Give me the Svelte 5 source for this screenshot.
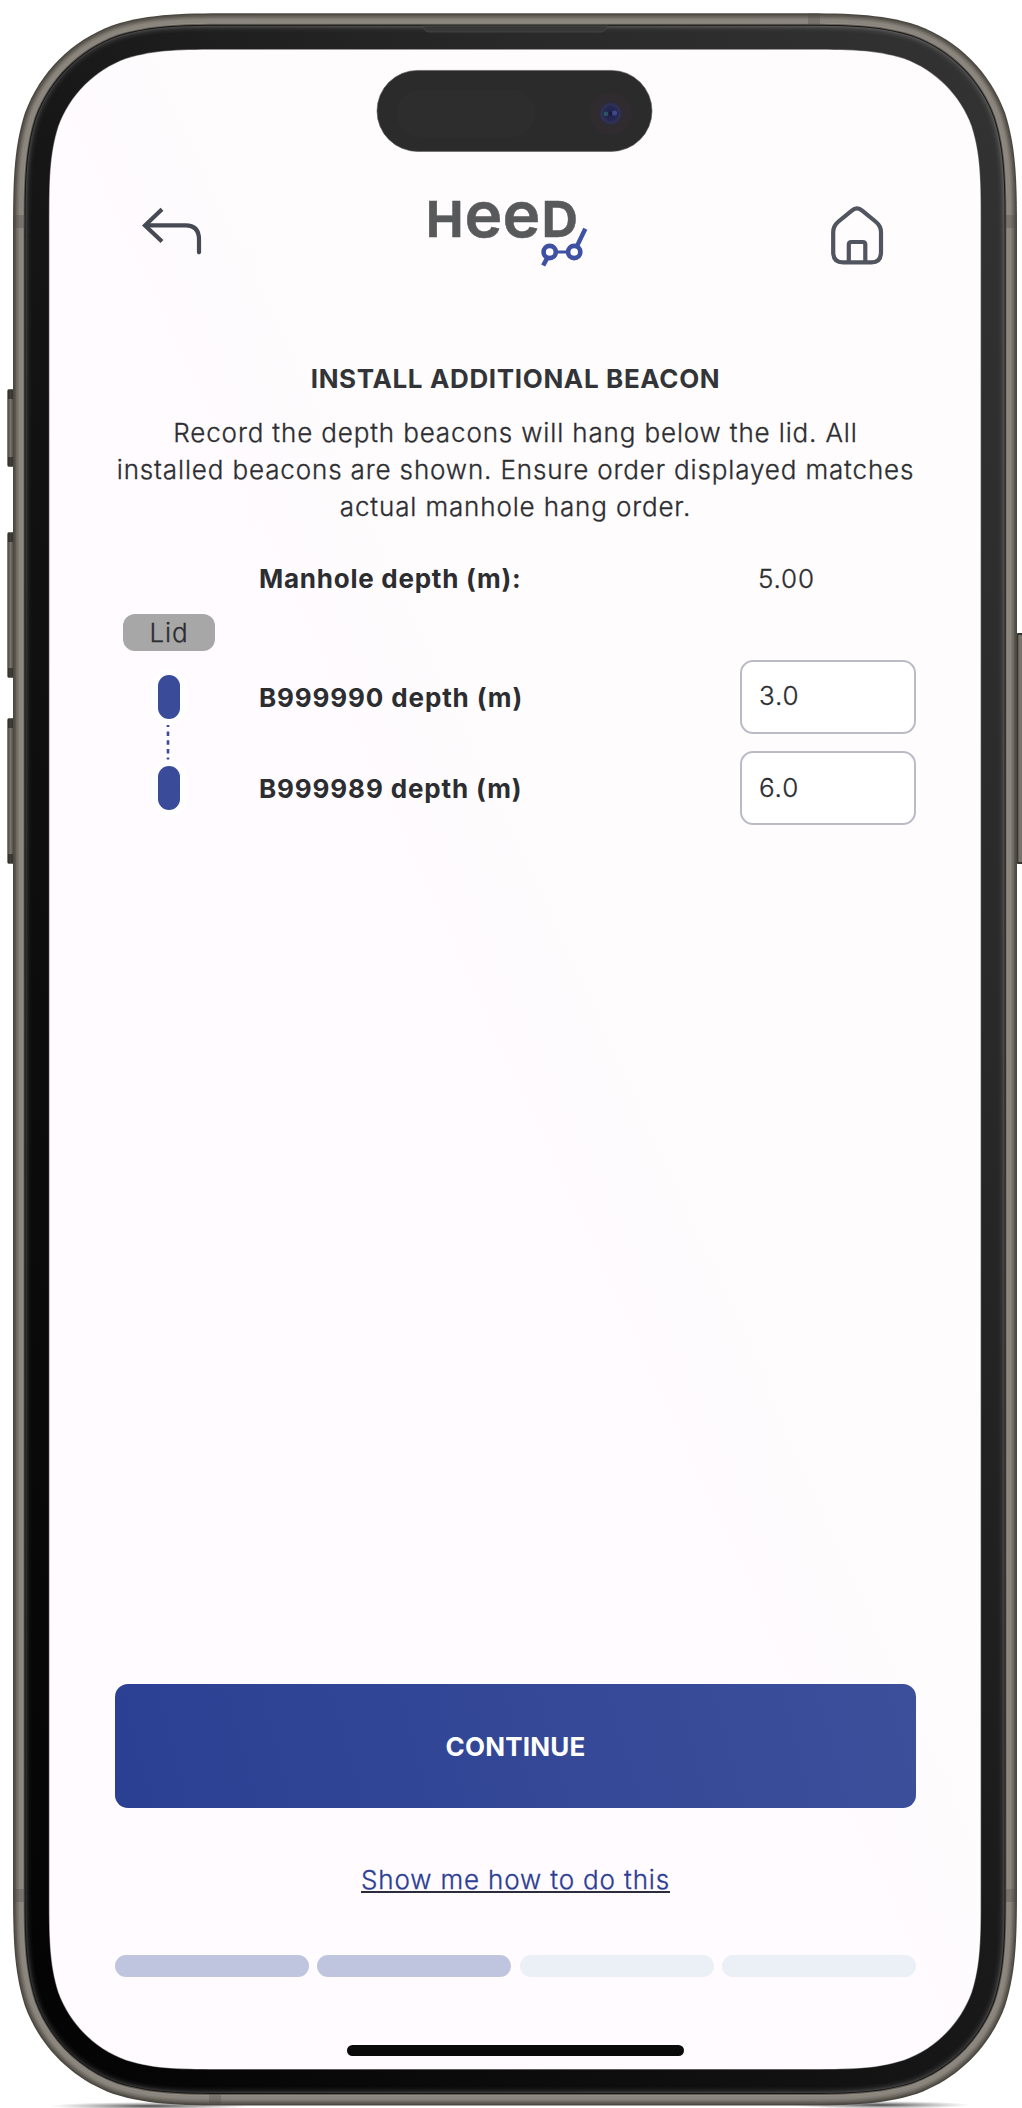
<script>
  const beacons = $state([
    { id: 'B999990', depth: '3.0' },
    { id: 'B999989', depth: '6.0' }
  ]);
  const steps = [true, true, false, false];

  const frame = { left: 13, top: 13.3, right: 1017, bottom: 2105.5, radius: 158 };

  // Continuous-corner rectangle, inset from the outer edge of the frame.
  function shell(inset) {
    const l = frame.left + inset;
    const t = frame.top + inset;
    const r = frame.right - inset;
    const b = frame.bottom - inset;
    const k = frame.radius - inset;
    const [s, m, n, p, q, u, v] = [1.45, 1.0885, 0.8684, 0.6315, 0.0749, 0.3728, 0.1691].map((f) => f * k);
    return `M${l + s} ${t}H${r - s}C${r - m} ${t} ${r - n} ${t} ${r - p} ${t + q}C${r - u} ${t + v} ${r - v} ${t + u} ${r - q} ${t + p}C${r} ${t + n} ${r} ${t + m} ${r} ${t + s}V${b - s}C${r} ${b - m} ${r} ${b - n} ${r - q} ${b - p}C${r - v} ${b - u} ${r - u} ${b - v} ${r - p} ${b - q}C${r - n} ${b} ${r - m} ${b} ${r - s} ${b}H${l + s}C${l + m} ${b} ${l + n} ${b} ${l + p} ${b - q}C${l + u} ${b - v} ${l + v} ${b - u} ${l + q} ${b - p}C${l} ${b - n} ${l} ${b - m} ${l} ${b - s}V${t + s}C${l} ${t + m} ${l} ${t + n} ${l + q} ${t + p}C${l + v} ${t + u} ${l + u} ${t + v} ${l + p} ${t + q}C${l + n} ${t} ${l + m} ${t} ${l + s} ${t}Z`;
  }

  const rim = [
    [0, '#4b4841'], [1.5, '#5b5750'], [3, '#6d6860'], [4.5, '#7d7870'], [6, '#8a857d'],
    [9.5, '#928d85'], [10.5, '#625e57'], [11.4, '#1a1917']
  ];
  const sheen = [[13, 0.18], [14, 0.13], [15, 0.08], [16, 0.05], [17, 0.03], [18, 0.015]];
  const leftKeys = [[389, 78], [532, 146], [718, 146]];
</script>

<main class="device">
  <svg class="chassis" viewBox="0 0 1022 2108" aria-hidden="true">
    <defs>
      <linearGradient id="glass" x1="0" y1="1" x2="1" y2="0">
        <stop offset="0" stop-color="#030303" />
        <stop offset="0.4" stop-color="#111" />
        <stop offset="0.75" stop-color="#292929" />
        <stop offset="1" stop-color="#333" />
      </linearGradient>
      <linearGradient id="paper" x1="0" y1="1" x2="1" y2="0">
        <stop offset="0.45" stop-color="#fffbff" />
        <stop offset="0.6" stop-color="#fefcfd" />
      </linearGradient>
      <linearGradient id="key" x1="0" x2="1">
        <stop offset="0" stop-color="#45423a" />
        <stop offset="0.45" stop-color="#78746a" />
        <stop offset="1" stop-color="#44413a" />
      </linearGradient>
      <radialGradient id="ground">
        <stop offset="0" stop-color="#333" stop-opacity="0.9" />
        <stop offset="1" stop-color="#777" stop-opacity="0" />
      </radialGradient>
      <radialGradient id="lens">
        <stop offset="0" stop-color="#20234a" />
        <stop offset="0.55" stop-color="#24274f" />
        <stop offset="0.8" stop-color="#303257" />
        <stop offset="1" stop-color="#2a2a3b" />
      </radialGradient>
    </defs>
    <ellipse cx="150" cy="2106" rx="100" ry="4" fill="url(#ground)" />
    <ellipse cx="880" cy="2105" rx="90" ry="4" fill="url(#ground)" />
    {#each leftKeys as [y, h]}
      <rect x="7.3" {y} width="7" height={h} rx="2" fill="url(#key)" />
      <rect x="8" y={y + 1} width="5" height="9" fill="#24221d" opacity="0.65" />
      <rect x="8" y={y + h - 10} width="5" height="9" fill="#24221d" opacity="0.65" />
    {/each}
    <rect x="1016" y="633" width="9" height="231" rx="2" fill="#36342f" />
    <rect x="1018.3" y="635" width="4" height="227" fill="#77736a" />
    {#each rim as [inset, tone]}
      <path d={shell(inset)} fill={tone} />
    {/each}
    <path d={shell(12.4)} fill="url(#glass)" />
    {#each sheen as [inset, alpha]}
      <path d={shell(inset)} fill="none" stroke="#fff" stroke-opacity={alpha} />
    {/each}
    <g fill="#4d4a43" opacity="0.3">
      <rect x="13" y="215" width="12" height="13" />
      <rect x="13" y="1889" width="12" height="13" />
      <rect x="1006" y="215" width="11" height="13" />
      <rect x="1006" y="1889" width="11" height="13" />
      <rect x="808" y="13.3" width="12" height="11" />
      <rect x="209" y="2094" width="12" height="11" />
    </g>
    <path d="M422 26H608L605 30Q604 32 601 32H429Q426 32 425 30Z" fill="#363736" stroke="#4d4e4d" stroke-width="0.7" />
    <path d={shell(35.8)} fill="#777" />
    <path d={shell(36.4)} fill="url(#paper)" />
    <rect x="377" y="70.4" width="275" height="81" rx="40.5" fill="#2a2b2a" stroke="#555855" stroke-width="0.6" />
    <rect x="396" y="90" width="140" height="47" rx="23.5" fill="#2c2d2c" />
    <circle cx="610.7" cy="113.5" r="21.5" fill="#2f2b2f" />
    <circle cx="610.7" cy="113.5" r="11.5" fill="url(#lens)" />
    <circle cx="606" cy="113.8" r="2.4" fill="#2c5363" />
    <circle cx="614.5" cy="113" r="2.6" fill="#43468c" />
    <circle cx="610.5" cy="113.5" r="1.8" fill="#171936" />
  </svg>

  <div class="screen">
    <header>
      <button class="icon" aria-label="Back">
        <svg width="62" height="52" viewBox="141 204 62 52" fill="none" stroke="#454a55" stroke-width="4.2">
          <path d="M162 209.3L145 225.4L162 241.6" stroke-linejoin="miter" />
          <path d="M147 225.4H185.5Q199 225.4 199 239.5V252.3" stroke-linecap="round" />
        </svg>
      </button>
      <svg class="logo" width="164" height="112" viewBox="426 166 164 112" role="img" aria-label="HeeD">
        <g class="word">
          <text class="cap" x="426" y="237">H</text>
          <text class="low" x="464.4" y="237">e</text>
          <text class="low" x="502.6" y="237">e</text>
          <text class="cap" x="541.8" y="237">D</text>
        </g>
        <g fill="none" stroke="#3f51a3">
          <path d="M543.2 265.5L547.5 257.5" stroke-width="4.6" />
          <path d="M556 252H568" stroke-width="3" />
          <path d="M576.8 246.5L585.3 228.8" stroke-width="4.4" />
          <circle cx="549.7" cy="252" r="6.1" stroke-width="4.6" />
          <circle cx="574.2" cy="252" r="6.1" stroke-width="4.6" />
        </g>
      </svg>
      <button class="icon" aria-label="Home">
        <svg width="54" height="60" viewBox="830 205 54 60" fill="none" stroke="#51555f" stroke-width="4.2" stroke-linejoin="round">
          <path d="M833.2 232Q833.2 226 838.5 221.5L851.5 210.8Q857 206 862.5 210.8L875.5 221.5Q881 226 881 232V252Q881 262.4 871.5 262.4H843Q833.2 262.4 833.2 252Z" />
          <path d="M848.8 261V244.5Q848.8 242 851.3 242H862.8Q865.3 242 865.3 244.5V261" />
        </svg>
      </button>
    </header>

    <section class="intro">
      <h1>INSTALL ADDITIONAL BEACON</h1>
      <p>Record the depth beacons will hang below the lid. All<br />installed beacons are shown. Ensure order displayed matches<br />actual manhole hang order.</p>
    </section>

    <div class="manhole">
      <strong>Manhole depth (m):</strong>
      <span>5.00</span>
    </div>
    <div class="lid">Lid</div>
    <div class="beacons">
      {#each beacons as beacon, i}
        <label class="beacon">
          <span class="marker"><i></i></span>
          <strong>{beacon.id} depth (m)</strong>
          <input bind:value={beacon.depth} inputmode="decimal" />
        </label>
        {#if i < beacons.length - 1}
          <svg class="link-line" width="4" height="36" viewBox="0 0 4 36" aria-hidden="true">
            <path d="M2 1V3M2 7.5V12M2 16.2V20.7M2 24.9V29.4M2 33.4V35.4" stroke="#3a4b9a" stroke-width="2.6" />
          </svg>
        {/if}
      {/each}
    </div>

    <footer>
      <button class="continue">CONTINUE</button>
      <a href="#help">Show me how to do this</a>
      <div class="steps">
        {#each steps as done}
          <span class:done></span>
        {/each}
      </div>
      <div class="home-bar"></div>
    </footer>
  </div>
</main>

<style>
  :global(body) {
    background: #fff;
    overflow: hidden;
  }
  .device {
    position: relative;
    width: 1022px;
    height: 2108px;
    overflow: hidden;
    font-family: Inter, 'Liberation Sans', sans-serif;
    font-size: 26px;
    font-weight: 300;
    letter-spacing: 0.86px;
    color: #2c2d30;
    -webkit-text-stroke: 0.3px currentColor;
  }
  .chassis {
    position: absolute;
    inset: 0;
    width: 1022px;
    height: 2108px;
  }
  .screen {
    position: relative;
    box-sizing: border-box;
    height: 2108px;
    padding: 196px 106px 52px 115px;
    display: flex;
    flex-direction: column;
  }
  button {
    font: inherit;
    border: 0;
    background: none;
    padding: 0;
    cursor: pointer;
  }
  h1,
  strong,
  .continue {
    -webkit-text-stroke: 0;
  }
  .icon {
    display: block;
    line-height: 0;
  }
  svg {
    display: block;
  }
  header {
    display: flex;
    justify-content: space-between;
    align-items: flex-start;
    height: 72px;
    padding: 0 32px 0 26px;
  }
  header .icon:first-child {
    margin-top: 8px;
  }
  header .icon:last-child {
    margin-top: 9px;
  }
  .logo {
    margin: -30px 0 0 -17px;
    overflow: visible;
  }
  .word {
    fill: #58595b;
    stroke: #58595b;
    stroke-width: 0.5px;
    letter-spacing: 0;
    -webkit-text-stroke: 0;
  }
  .cap {
    font-size: 50px;
    font-weight: 700;
  }
  .low {
    font-size: 64px;
    font-weight: 600;
  }
  .intro {
    text-align: center;
    margin-top: 91.5px;
  }
  h1 {
    margin: 0;
    font-size: 26px;
    line-height: 37px;
    font-weight: 700;
    letter-spacing: 0.64px;
    color: #333437;
  }
  p {
    margin: 17.5px -10px 0;
    line-height: 37px;
    white-space: nowrap;
  }
  .manhole {
    display: grid;
    grid-template-columns: 1fr 158px;
    margin-top: 35px;
    padding-left: 144px;
    line-height: 37px;
  }
  strong {
    font-weight: 700;
    letter-spacing: 0.75px;
    color: #2c2d30;
  }
  .lid {
    width: 92px;
    height: 37px;
    margin: 17px 0 0 8px;
    border-radius: 12px;
    background: #a7a7a7;
    line-height: 38px;
    text-align: center;
  }
  .beacons {
    margin-top: 8.5px;
    display: flex;
    flex-direction: column;
  }
  .beacon {
    display: grid;
    grid-template-columns: 144px 1fr 176px;
    align-items: center;
    height: 74px;
  }
  .beacon strong {
    padding-top: 1.5px;
    letter-spacing: 0.87px;
  }
  .marker i {
    display: block;
    width: 22px;
    height: 44px;
    margin-left: 43px;
    border-radius: 11px;
    background: #3a4b9a;
    box-shadow: 0 0 0 6px #fff;
  }
  .link-line {
    margin: -10px 0 -8.5px 51px;
    position: relative;
  }
  input {
    box-sizing: border-box;
    width: 176px;
    height: 74px;
    padding: 0 17px 2px;
    border: 2px solid #bbbbc8;
    border-radius: 13px;
    background: #fff;
    color: inherit;
    font: inherit;
    letter-spacing: inherit;
  }
  footer {
    margin-top: auto;
    display: flex;
    flex-direction: column;
    align-items: center;
  }
  .continue {
    width: 801px;
    height: 124px;
    border-radius: 13px;
    background: linear-gradient(75deg, #2b4093, #3c4f9b);
    color: #fff;
    font-weight: 700;
    letter-spacing: 0.2px;
  }
  a {
    margin-top: 61px;
    color: #2c3d94;
    line-height: 22px;
    border-bottom: 2px solid #2c2d3c;
    text-decoration: none;
    white-space: nowrap;
    -webkit-text-stroke-color: #2c3d94;
  }
  .steps {
    display: grid;
    grid-template-columns: repeat(4, 1fr);
    gap: 8.7px;
    width: 801px;
    margin-top: 62px;
  }
  .steps span {
    height: 22px;
    border-radius: 11px;
    background: #ebeff6;
  }
  .steps .done {
    background: #c0c5df;
  }
  .home-bar {
    width: 337px;
    height: 11px;
    margin-top: 68px;
    border-radius: 6px;
    background: #0a0a0a;
  }
</style>
